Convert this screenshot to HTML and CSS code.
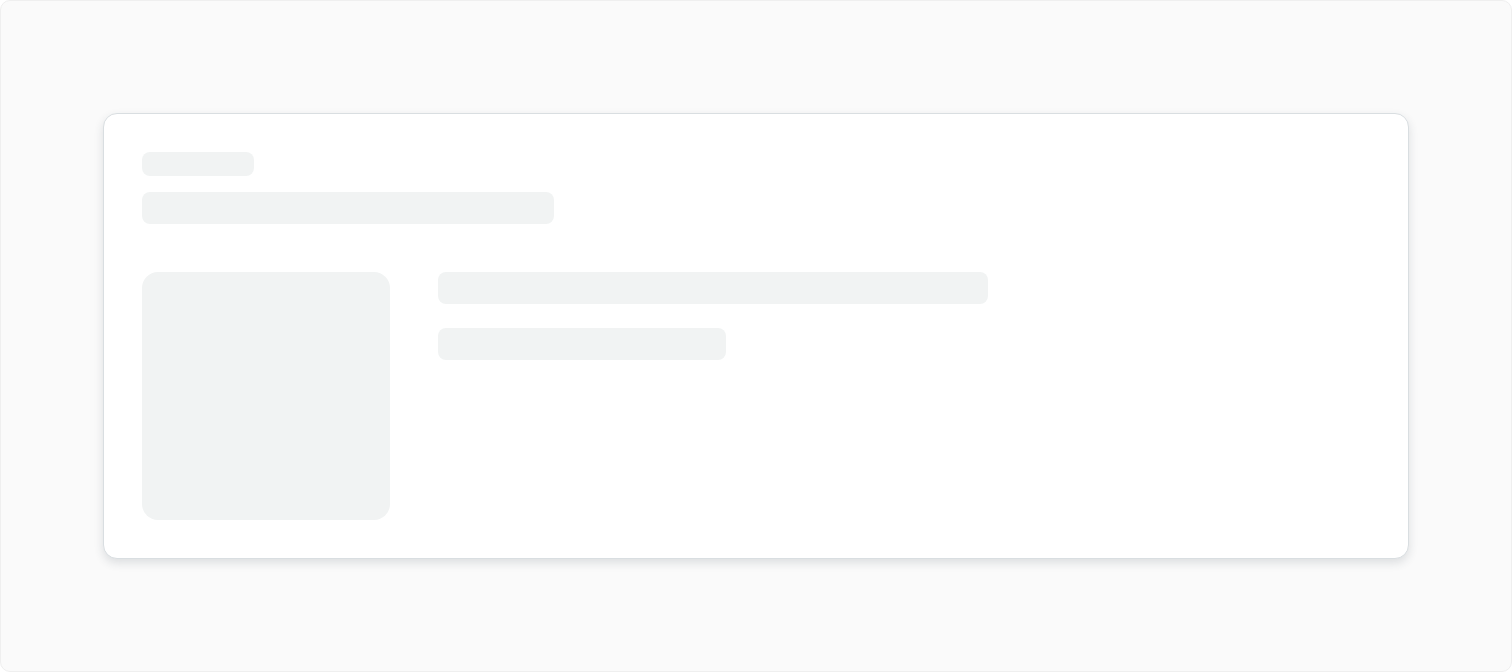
FILE: index.html
```html
<!DOCTYPE html>
<html lang="en">
<head>
<meta charset="utf-8">
<title>Loading</title>
<link rel="stylesheet" href="styles.css">
</head>
<body>
<div class="frame">
  <div class="card">
    <div class="header">
      <div class="sk sk-eyebrow"></div>
      <div class="sk sk-title"></div>
    </div>
    <div class="body">
      <div class="sk sk-media"></div>
      <div class="lines">
        <div class="sk sk-line1"></div>
        <div class="sk sk-line2"></div>
      </div>
    </div>
  </div>
</div>
</body>
</html>
```

FILE: styles.css
```css
html, body {
  margin: 0;
  padding: 0;
  background: #ffffff;
  font-family: "Inter", "Liberation Sans", sans-serif;
}

.frame {
  box-sizing: border-box;
  width: 1512px;
  height: 672px;
  background: #fafafa;
  border: 1px solid #efefef;
  border-radius: 10px;
  display: flex;
  align-items: center;
  justify-content: center;
}

.card {
  box-sizing: border-box;
  width: 1306px;
  height: 446px;
  background: #ffffff;
  border: 1px solid #d9dee1;
  border-radius: 14px;
  padding: 38px;
  box-shadow: 0 4px 10px rgba(40, 60, 70, 0.14);
  display: flex;
  flex-direction: column;
  gap: 48px;
}

.header {
  display: flex;
  flex-direction: column;
  gap: 16px;
}

.sk {
  background: #f1f3f3;
  border-radius: 8px;
}

.sk-eyebrow {
  width: 112px;
  height: 24px;
}

.sk-title {
  width: 412px;
  height: 32px;
}

.body {
  display: flex;
  gap: 48px;
}

.sk-media {
  width: 248px;
  height: 248px;
  border-radius: 16px;
  flex-shrink: 0;
}

.lines {
  display: flex;
  flex-direction: column;
  gap: 24px;
}

.sk-line1 {
  width: 550px;
  height: 32px;
}

.sk-line2 {
  width: 288px;
  height: 32px;
}
```
